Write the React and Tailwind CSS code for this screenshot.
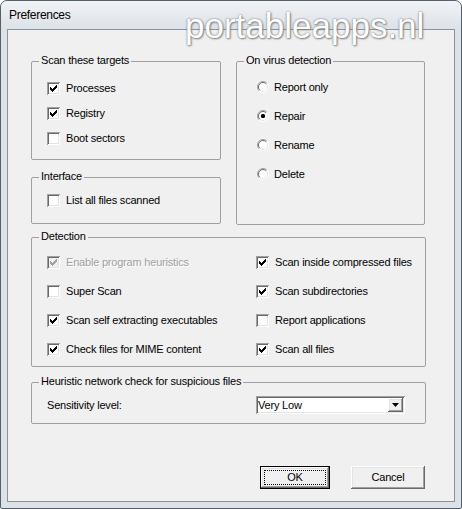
const sunken =
  "shadow-[inset_1px_1px_#a0a0a0,inset_-1px_-1px_#ffffff,inset_2px_2px_#696969,inset_-2px_-2px_#e3e3e3]";
const raised =
  "shadow-[inset_-1px_-1px_#696969,inset_1px_1px_#ffffff,inset_-2px_-2px_#a0a0a0,inset_2px_2px_#e3e3e3]";

function CheckBox({ checked, disabled }) {
  return (
    <div
      className={`w-[13px] h-[13px] shrink-0 flex pl-[3px] pt-[3px] ${sunken} ${
        disabled ? "bg-[#f0f0f0]" : "bg-white"
      }`}
    >
      {checked && (
        <svg width="7" height="7" viewBox="0 0 7 7" fill={disabled ? "#a0a0a0" : "#000"}>
          <path d="M6 0h1v1h-1z M5 1h2v1h-2z M0 2h1v1h-1z M4 2h3v1h-3z M0 3h2v1h-2z M3 3h3v1h-3z M0 4h5v1h-5z M1 5h3v1h-3z M2 6h1v1h-1z" />
        </svg>
      )}
    </div>
  );
}

function Radio({ checked }) {
  return (
    <svg width="12" height="12" viewBox="0 0 12 12" className="shrink-0">
      <circle cx="6" cy="6" r="5.5" fill="#fff" />
      <path d="M2.1 9.9 A5.5 5.5 0 0 1 9.9 2.1" fill="none" stroke="#a0a0a0" />
      <path d="M2.8 9.2 A4.5 4.5 0 0 1 9.2 2.8" fill="none" stroke="#696969" />
      <path d="M9.9 2.1 A5.5 5.5 0 0 1 2.1 9.9" fill="none" stroke="#ffffff" />
      <path d="M9.2 2.8 A4.5 4.5 0 0 1 2.8 9.2" fill="none" stroke="#e3e3e3" />
      {checked && <rect x="4" y="4" width="4" height="4" rx="1.5" fill="#000" />}
    </svg>
  );
}

function Check({ label, checked, disabled }) {
  return (
    <div className="flex items-center h-[13px] gap-[6px]">
      <CheckBox checked={checked} disabled={disabled} />
      <span
        className={
          disabled ? "text-[#a0a0a0] [text-shadow:1px_1px_#ffffff]" : "text-black"
        }
      >
        {label}
      </span>
    </div>
  );
}

function Option({ label, checked }) {
  return (
    <div className="flex items-center h-[12px] gap-[5px]">
      <Radio checked={checked} />
      <span>{label}</span>
    </div>
  );
}

function Group({ title, className, children }) {
  return (
    <div className={`relative border border-[#a0a0a0] rounded-[2px] ${className}`}>
      <span className="absolute left-[7px] -top-[8px] px-[2px] bg-[#f0f0f0] leading-[13px]">
        {title}
      </span>
      {children}
    </div>
  );
}

export default function App() {
  return (
    <div className="w-[462px] h-[509px] bg-white">
      <div className="relative w-[462px] h-[509px] flex flex-col border border-[#55606b] rounded-t-[7px] rounded-b-[2px] bg-[#dce2e8] font-['Liberation_Sans',Arial,sans-serif] overflow-hidden">
        <div className="h-[28px] shrink-0 flex items-center pl-[8px] text-[12px] tracking-[-0.3px] text-black bg-gradient-to-b from-[#f1f3f6] to-[#dce2e8] rounded-t-[6px]">
          Preferences
        </div>

        <div className="mx-[6px] h-[473px] border border-[#8a939c] bg-[#f0f0f0] text-[11px] tracking-[-0.2px] leading-[13px] text-black pl-[23px] pt-[31px]">
          <div className="flex">
            <div className="flex flex-col">
              <Group title="Scan these targets" className="w-[190px] h-[99px] pt-[20px] pl-[15px]">
                <div className="flex flex-col gap-[12px]">
                  <Check label="Processes" checked />
                  <Check label="Registry" checked />
                  <Check label="Boot sectors" />
                </div>
              </Group>
              <Group title="Interface" className="mt-[17px] w-[190px] h-[47px] pt-[16px] pl-[15px]">
                <Check label="List all files scanned" />
              </Group>
            </div>
            <Group title="On virus detection" className="ml-[15px] w-[189px] h-[164px] pt-[19px] pl-[20px]">
              <div className="flex flex-col gap-[17px]">
                <Option label="Report only" />
                <Option label="Repair" checked />
                <Option label="Rename" />
                <Option label="Delete" />
              </div>
            </Group>
          </div>

          <Group title="Detection" className="mt-[12px] w-[395px] h-[130px] pt-[18px] pl-[15px]">
            <div className="grid grid-cols-[209px_1fr] gap-y-[16px]">
              <Check label="Enable program heuristics" checked disabled />
              <Check label="Scan inside compressed files" checked />
              <Check label="Super Scan" />
              <Check label="Scan subdirectories" checked />
              <Check label="Scan self extracting executables" checked />
              <Check label="Report applications" />
              <Check label="Check files for MIME content" checked />
              <Check label="Scan all files" checked />
            </div>
          </Group>

          <Group
            title="Heuristic network check for suspicious files"
            className="mt-[15px] w-[395px] h-[42px] pt-[13px] pl-[15px]"
          >
            <div className="flex items-center">
              <span className="w-[209px]">Sensitivity level:</span>
              <div className={`w-[149px] h-[18px] bg-white flex items-center justify-between pl-[2px] pr-[2px] ${sunken}`}>
                <span>Very Low</span>
                <div className={`w-[15px] h-[14px] bg-[#f0f0f0] flex items-center justify-center ${raised}`}>
                  <svg width="7" height="4" viewBox="0 0 7 4">
                    <path d="M0 0h7L3.5 4z" fill="#000" />
                  </svg>
                </div>
              </div>
            </div>
          </Group>

          <div className="mt-[42px] ml-[229px] flex gap-[21px]">
            <div className="w-[70px] h-[23px] border border-black bg-[#f0f0f0]">
              <div className={`relative w-full h-full flex items-center justify-center ${raised}`}>
                <div className="absolute inset-[3px] border border-dotted border-black" />
                <span>OK</span>
              </div>
            </div>
            <div className={`w-[74px] h-[23px] bg-[#f0f0f0] flex items-center justify-center ${raised}`}>
              Cancel
            </div>
          </div>
        </div>

        <div className="absolute left-[184px] top-[7px] text-[35px] leading-[35px] text-white font-['Liberation_Sans',Arial,sans-serif] [text-shadow:0_0_2px_#6b6b6b,1px_1px_2px_#8a8a8a] pointer-events-none">
          portableapps.nl
        </div>
      </div>
    </div>
  );
}
